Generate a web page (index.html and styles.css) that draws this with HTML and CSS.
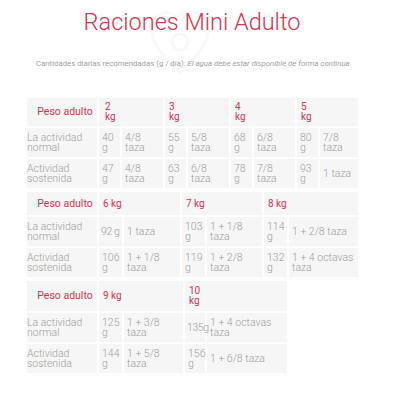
FILE: index.html
```html
<!DOCTYPE html>
<html lang="es">
<head>
<meta charset="utf-8">
<link rel="stylesheet" href="styles.css">
</head>
<body>
<div class="page">
  <svg class="mark" width="70" height="80" viewBox="0 0 70 80">
    <path d="M35 70 C10 50 5 35 8 22 C12 8 28 6 35 20 C42 6 58 8 62 22 C65 35 60 50 35 70 Z" fill="none" stroke="#f8f8f8" stroke-width="3"/>
    <circle cx="35" cy="40" r="8" fill="none" stroke="#f8f8f8" stroke-width="3"/>
  </svg>
  <h1 class="title">Raciones Mini Adulto</h1>
  <p class="sub">Cantidades diarias recomendadas (g / día): <em>El agua debe estar disponible de forma continua</em></p>

  <table class="tbl t1">
    <colgroup><col class="c-lab"><col style="width:23px"><col style="width:43px"><col style="width:23px"><col style="width:43px"><col style="width:23px"><col style="width:43px"><col style="width:23px"><col style="width:40px"></colgroup>
    <tr class="head"><th class="lab">Peso adulto</th><th colspan="2">2 kg</th><th colspan="2" class="c">3 kg</th><th colspan="2" class="c">4 kg</th><th colspan="2" class="c">5 kg</th></tr>
    <tr><td class="lab">La actividad normal</td><td>40 g</td><td>4/8 taza</td><td>55 g</td><td>5/8 taza</td><td>68 g</td><td>6/8 taza</td><td>80 g</td><td>7/8 taza</td></tr>
    <tr><td class="lab">Actividad sostenida</td><td>47 g</td><td>4/8 taza</td><td>63 g</td><td>6/8 taza</td><td>78 g</td><td>7/8 taza</td><td>93 g</td><td>1 taza</td></tr>
  </table>

  <table class="tbl t2">
    <colgroup><col class="c-lab"><col style="width:25px"><col style="width:58px"><col style="width:25px"><col style="width:57px"><col style="width:25px"><col style="width:71px"></colgroup>
    <tr class="head"><th class="lab">Peso adulto</th><th colspan="2">6 kg</th><th colspan="2">7 kg</th><th colspan="2">8 kg</th></tr>
    <tr><td class="lab">La actividad normal</td><td class="tight">92&nbsp;g</td><td>1 taza</td><td>103 g</td><td>1 + 1/8 taza</td><td>114 g</td><td>1 + 2/8 taza</td></tr>
    <tr><td class="lab">Actividad sostenida</td><td>106 g</td><td>1 + 1/8 taza</td><td>119 g</td><td>1 + 2/8 taza</td><td>132 g</td><td>1 + 4 octavas taza</td></tr>
  </table>

  <table class="tbl t3">
    <colgroup><col class="c-lab"><col style="width:25px"><col style="width:61px"><col style="width:22px"><col style="width:82px"></colgroup>
    <tr class="head"><th class="lab">Peso adulto</th><th colspan="2">9 kg</th><th colspan="2" class="ten">10 kg</th></tr>
    <tr><td class="lab">La actividad normal</td><td>125 g</td><td>1 + 3/8 taza</td><td class="tight">135g</td><td>1 + 4 octavas taza</td></tr>
    <tr><td class="lab">Actividad sostenida</td><td>144 g</td><td>1 + 5/8 taza</td><td>156 g</td><td>1 + 6/8 taza</td></tr>
  </table>
</div>
</body>
</html>
```
FILE: styles.css
```css
* { box-sizing: border-box; }
html, body { margin: 0; padding: 0; background: #fff; }
body { font-family: Roboto, "Noto Sans", sans-serif; width: 400px; height: 400px; overflow: hidden; }
.page { position: relative; padding: 0 0 0 25px; }
.mark { position: absolute; left: 145px; top: 2px; }
.title {
  position: relative;
  margin: 0; padding-top: 8px;
  text-align: center;
  width: 334px;
  font-weight: 300;
  font-size: 23.5px;
  line-height: 28px;
  color: #d1364d;
}
.sub {
  position: relative;
  margin: 23px 0 0 11px;
  font-size: 7.8px;
  line-height: 10px;
  color: #a0a0a0;
  white-space: nowrap;
}
.sub em { font-style: italic; }
.tbl {
  border-collapse: collapse;
  table-layout: fixed;
  font-size: 10.5px;
  font-weight: 300;
  line-height: 10px;
  color: #9e9e9e;
  position: relative;
}
.t1 { width: 333px; margin-top: 27px; }
.t2 { width: 333px; }
.t3 { width: 262px; }
.c-lab { width: 72px; }
.tbl td, .tbl th {
  background: #f6f6f6;
  border: 2px solid #fff;
  padding: 0 2px 0 3px;
  text-align: left;
  vertical-align: middle;
  font-weight: 300;
}
.tbl td { height: 31px; }
.tbl td.lab { padding-left: 0; }
.tbl td.tight { letter-spacing: -0.4px; padding-left: 2px; }
.tbl tr.head th {
  color: #cf3550;
  font-weight: 400;
  font-size: 10px;
  height: 25px;
  padding: 0 4px;
}
.t1 tr.head th { height: 30px; }
.tbl tr.head th.lab { text-align: center; font-size: 10.5px; padding: 0 4px 0 10px; }
.t1 tr.head th:nth-child(2) { padding-right: 48px; padding-left: 6px; }
.t1 tr.head th.c { padding-right: 48px; }
.t3 tr.head th.ten { padding-right: 80px; }
.t3 tr.head th { height: 32px; }
```
